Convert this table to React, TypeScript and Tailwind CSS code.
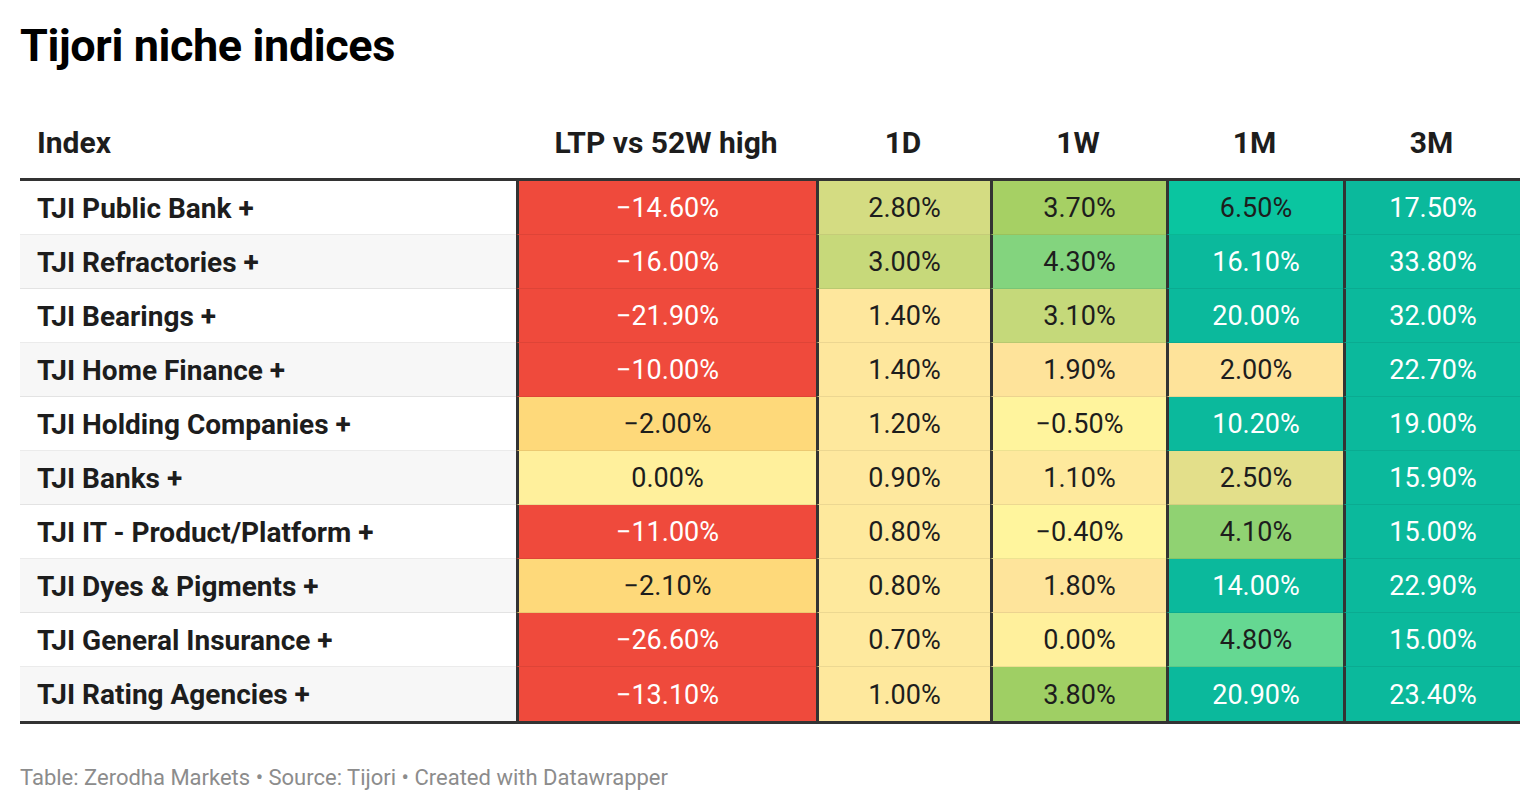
import React from "react";

type Cell = { v: string; bg: string; light?: boolean };

const RED = "#ef4a3c";
const TEAL = "#0bb99c";

const rows: { name: string; cells: Cell[] }[] = [
  {
    name: "TJI Public Bank +",
    cells: [
      { v: "−14.60%", bg: RED, light: true },
      { v: "2.80%", bg: "#d4dc82" },
      { v: "3.70%", bg: "#a6d064" },
      { v: "6.50%", bg: "#0ac5a0" },
      { v: "17.50%", bg: TEAL, light: true },
    ],
  },
  {
    name: "TJI Refractories +",
    cells: [
      { v: "−16.00%", bg: RED, light: true },
      { v: "3.00%", bg: "#c7d97a" },
      { v: "4.30%", bg: "#83d47e" },
      { v: "16.10%", bg: TEAL, light: true },
      { v: "33.80%", bg: TEAL, light: true },
    ],
  },
  {
    name: "TJI Bearings +",
    cells: [
      { v: "−21.90%", bg: RED, light: true },
      { v: "1.40%", bg: "#fee79d" },
      { v: "3.10%", bg: "#c5d97a" },
      { v: "20.00%", bg: TEAL, light: true },
      { v: "32.00%", bg: TEAL, light: true },
    ],
  },
  {
    name: "TJI Home Finance +",
    cells: [
      { v: "−10.00%", bg: RED, light: true },
      { v: "1.40%", bg: "#fee79d" },
      { v: "1.90%", bg: "#fee39a" },
      { v: "2.00%", bg: "#fee39a" },
      { v: "22.70%", bg: TEAL, light: true },
    ],
  },
  {
    name: "TJI Holding Companies +",
    cells: [
      { v: "−2.00%", bg: "#fed97a" },
      { v: "1.20%", bg: "#fee89d" },
      { v: "−0.50%", bg: "#fff49d" },
      { v: "10.20%", bg: TEAL, light: true },
      { v: "19.00%", bg: TEAL, light: true },
    ],
  },
  {
    name: "TJI Banks +",
    cells: [
      { v: "0.00%", bg: "#fff09c" },
      { v: "0.90%", bg: "#fee89e" },
      { v: "1.10%", bg: "#fee99d" },
      { v: "2.50%", bg: "#e3df8a" },
      { v: "15.90%", bg: TEAL, light: true },
    ],
  },
  {
    name: "TJI IT - Product/Platform +",
    cells: [
      { v: "−11.00%", bg: RED, light: true },
      { v: "0.80%", bg: "#fee99d" },
      { v: "−0.40%", bg: "#fff59d" },
      { v: "4.10%", bg: "#90d272" },
      { v: "15.00%", bg: TEAL, light: true },
    ],
  },
  {
    name: "TJI Dyes & Pigments +",
    cells: [
      { v: "−2.10%", bg: "#fed97a" },
      { v: "0.80%", bg: "#fee99d" },
      { v: "1.80%", bg: "#fee49b" },
      { v: "14.00%", bg: TEAL, light: true },
      { v: "22.90%", bg: TEAL, light: true },
    ],
  },
  {
    name: "TJI General Insurance +",
    cells: [
      { v: "−26.60%", bg: RED, light: true },
      { v: "0.70%", bg: "#fee99e" },
      { v: "0.00%", bg: "#fff09c" },
      { v: "4.80%", bg: "#65d892" },
      { v: "15.00%", bg: TEAL, light: true },
    ],
  },
  {
    name: "TJI Rating Agencies +",
    cells: [
      { v: "−13.10%", bg: RED, light: true },
      { v: "1.00%", bg: "#fee89d" },
      { v: "3.80%", bg: "#9fcf64" },
      { v: "20.90%", bg: TEAL, light: true },
      { v: "23.40%", bg: TEAL, light: true },
    ],
  },
];

const headers = ["LTP vs 52W high", "1D", "1W", "1M", "3M"];

export default function App() {
  return (
    <div
      className="w-[1540px] h-[810px] bg-white px-5 overflow-hidden"
      style={{ fontFamily: "Roboto, 'Liberation Sans', sans-serif" }}
    >
      <h1 className="pt-[23px] text-[45px] leading-none font-bold text-black tracking-[-0.4px]">
        Tijori niche indices
      </h1>

      <div className="mt-[32px]">
        <div className="grid grid-cols-[496px_300px_174px_176px_177px_177px] h-[78px] border-b-[3px] border-[#333333] box-content">
          <div className="flex items-center pt-[6px] pl-[17px] text-[30px] font-bold text-[#1d1d1d]">
            Index
          </div>
          {headers.map((h) => (
            <div
              key={h}
              className="flex items-center justify-center pt-[6px] text-[30px] font-bold text-[#1d1d1d]"
            >
              {h}
            </div>
          ))}
        </div>

        <div className="border-b-[3px] border-[#333333]">
          {rows.map((r, i) => (
            <div
              key={r.name}
              className="grid grid-cols-[496px_300px_174px_176px_177px_177px] h-[54px]"
            >
              <div
                className={`flex items-center pl-[17px] pt-[2px] text-[28px] font-bold text-[#1d1d1d] ${
                  i % 2 === 1 ? "bg-[#f7f7f7]" : "bg-white"
                } ${i < rows.length - 1 ? "border-b border-black/[0.08]" : ""}`}
              >
                {r.name}
              </div>
              {r.cells.map((c, j) => (
                <div
                  key={j}
                  className={`flex items-center justify-center pt-[2px] border-l-[3px] border-l-[#333333] text-[27px] ${
                    c.light ? "text-white" : "text-[#1d1d1d]"
                  } ${i < rows.length - 1 ? "border-b border-b-black/[0.07]" : ""}`}
                  style={{ backgroundColor: c.bg }}
                >
                  {c.v}
                </div>
              ))}
            </div>
          ))}
        </div>
      </div>

      <div className="mt-[43px] text-[22px] leading-none text-[#8c8c8c]">
        Table: Zerodha Markets • Source: Tijori • Created with Datawrapper
      </div>
    </div>
  );
}
